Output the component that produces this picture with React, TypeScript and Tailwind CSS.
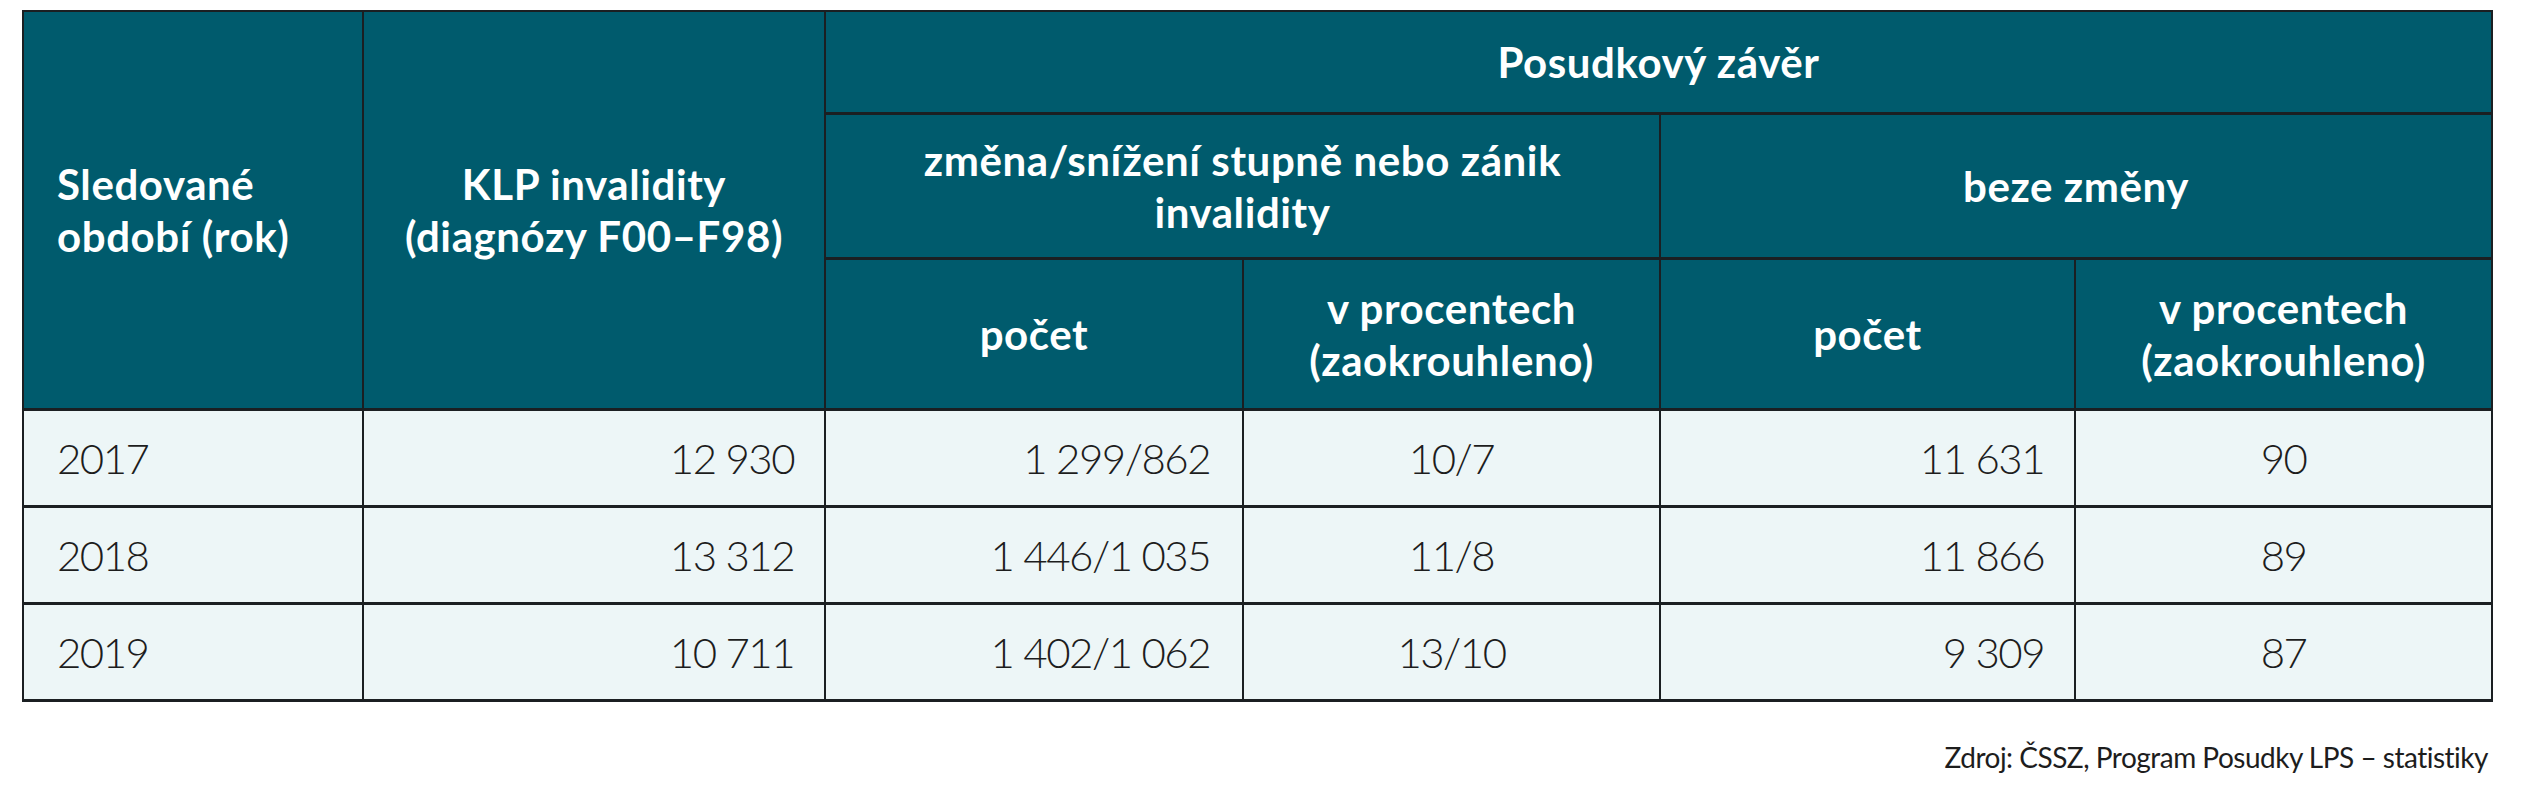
import React from "react";

const head = "bg-[#005b6d] text-white font-bold flex items-center text-[42px] leading-[52px] tracking-[0.6px]";
const cell = "bg-[#edf6f7] text-[#1d1d1d] flex items-center text-[42px] leading-[52px] font-light tracking-[-1.5px] whitespace-pre";

const rows = [
  ["2017", "12 930", "1 299/862", "10/7", "11 631", "90"],
  ["2018", "13 312", "1 446/1 035", "11/8", "11 866", "89"],
  ["2019", "10 711", "1 402/1 062", "13/10", "9 309", "87"],
];

export default function App() {
  return (
    <div className="w-[2532px] h-[800px] bg-white" style={{ fontFamily: "Lato, 'Open Sans', sans-serif" }}>
      <div className="pt-[10px] pl-[22px]">
        <div className="w-[2471px] bg-[#1b1f22] px-[2px] pt-[2px] pb-[3px] grid grid-cols-[338px_460px_416px_415px_413px_415px] grid-rows-[100px_142px_148px_94px_94px_94px] gap-x-[2px] gap-y-[3px]">
          <div className={`${head} row-span-3 pl-[33px]`}>
            <span>
              Sledované
              <br />
              období (rok)
            </span>
          </div>
          <div className={`${head} row-span-3 justify-center text-center`}>
            <span>
              KLP invalidity
              <br />
              (diagnózy F00–F98)
            </span>
          </div>
          <div className={`${head} col-span-4 justify-center`}>Posudkový závěr</div>
          <div className={`${head} col-span-2 justify-center text-center`}>
            <span>
              změna/snížení stupně nebo zánik
              <br />
              invalidity
            </span>
          </div>
          <div className={`${head} col-span-2 justify-center`}>beze změny</div>
          <div className={`${head} justify-center`}>počet</div>
          <div className={`${head} justify-center text-center`}>
            <span>
              v procentech
              <br />
              (zaokrouhleno)
            </span>
          </div>
          <div className={`${head} justify-center`}>počet</div>
          <div className={`${head} justify-center text-center`}>
            <span>
              v procentech
              <br />
              (zaokrouhleno)
            </span>
          </div>
          {rows.map((r) => (
            <React.Fragment key={r[0]}>
              <div className={`${cell} pl-[33px]`}>{r[0]}</div>
              <div className={`${cell} justify-end pr-[30px]`}>{r[1]}</div>
              <div className={`${cell} justify-end pr-[32px]`}>{r[2]}</div>
              <div className={`${cell} justify-center`}>{r[3]}</div>
              <div className={`${cell} justify-end pr-[30px]`}>{r[4]}</div>
              <div className={`${cell} justify-center`}>{r[5]}</div>
            </React.Fragment>
          ))}
        </div>
        <div className="w-[2471px] text-right pr-[5px] mt-[38px] text-[28px] leading-[34px] tracking-[-0.5px] text-[#1d1d1d]">
          Zdroj: ČSSZ, Program Posudky LPS – statistiky
        </div>
      </div>
    </div>
  );
}
